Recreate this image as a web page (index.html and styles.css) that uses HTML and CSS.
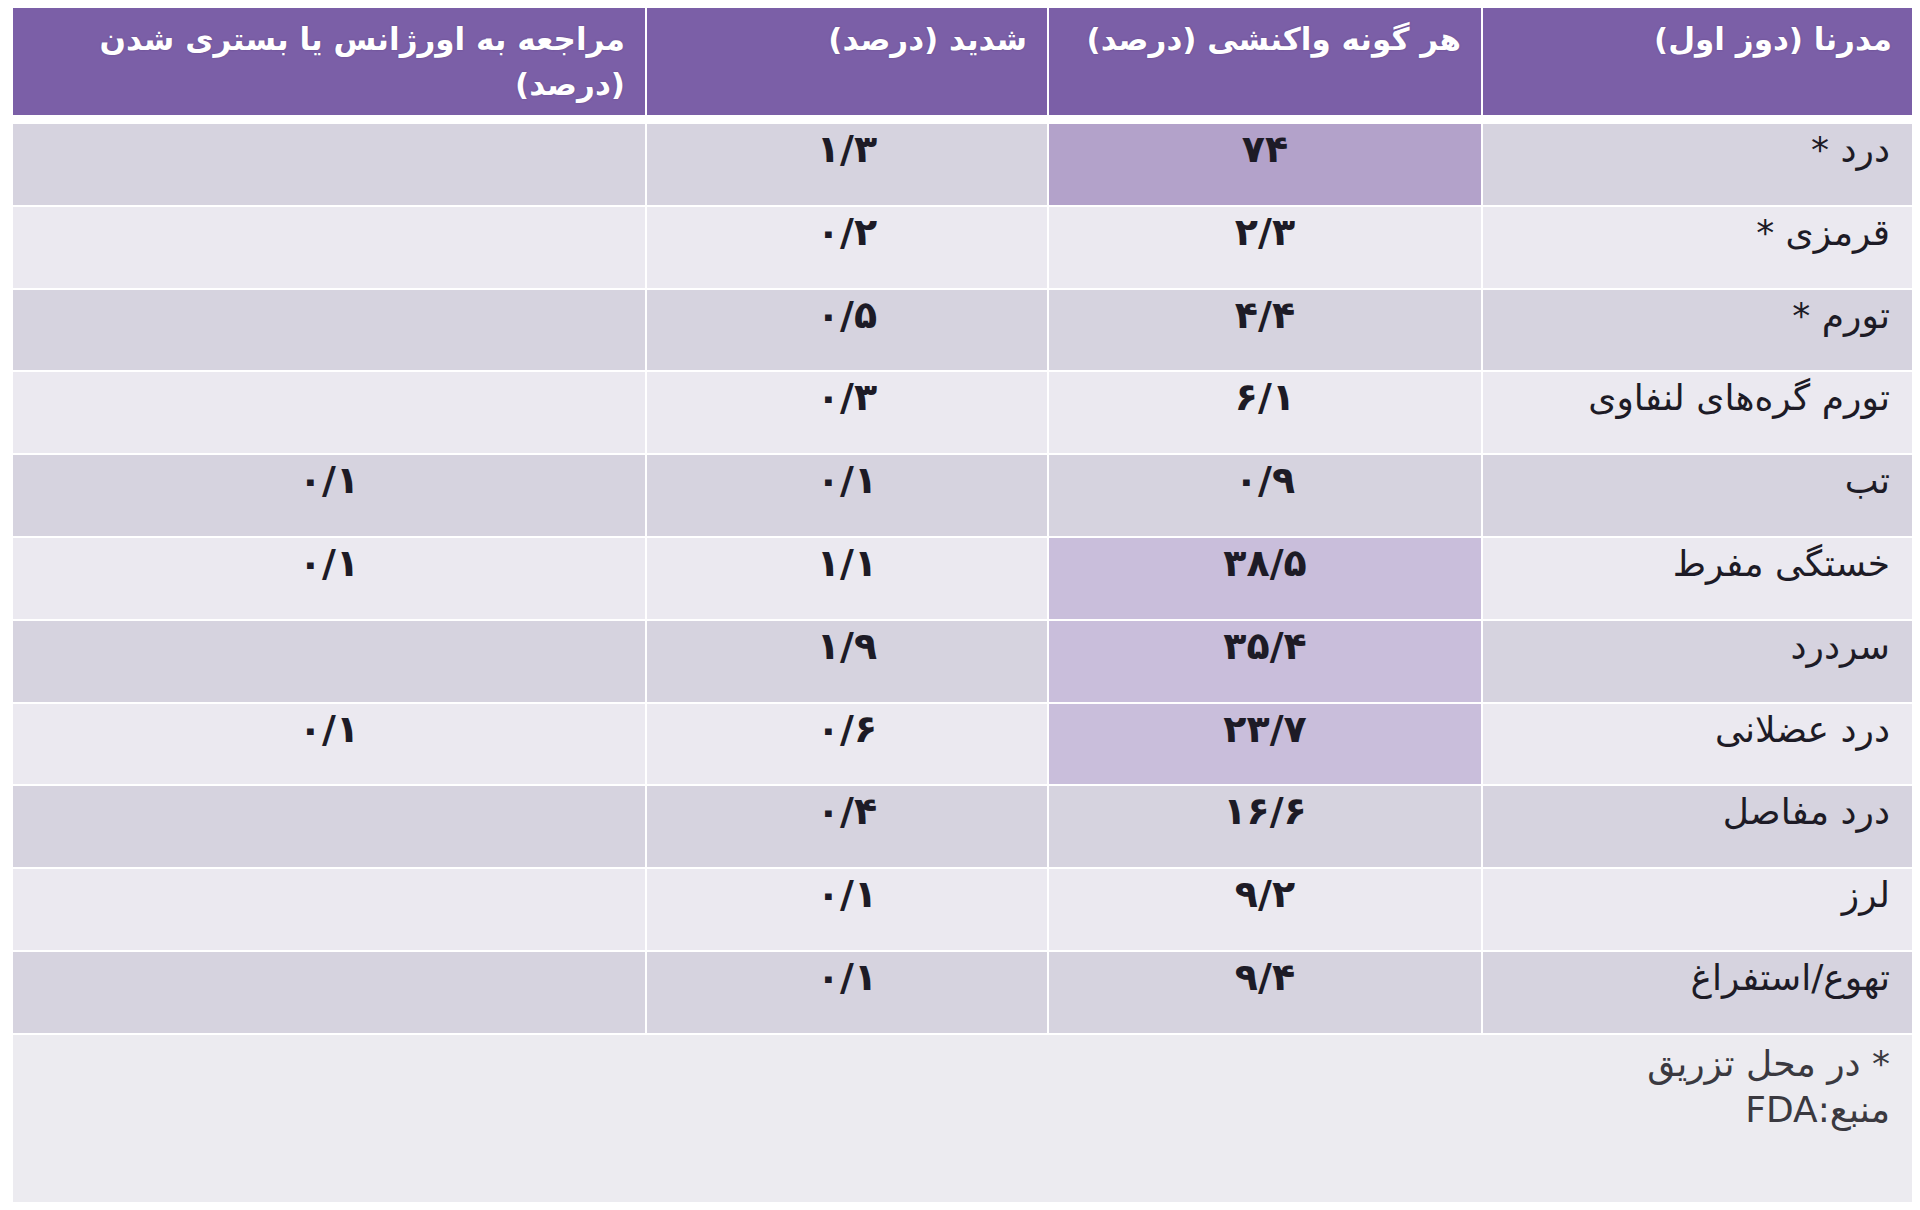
FILE: index.html
```html
<!DOCTYPE html>
<html lang="fa" dir="rtl">
<head>
<meta charset="utf-8">
<title>مدرنا (دوز اول)</title>
<link rel="stylesheet" href="styles.css">
</head>
<body>
<div class="sheet">
  <div class="table">
    <div class="cell head">مدرنا (دوز اول)</div>
    <div class="cell head">هر گونه واکنشی (درصد)</div>
    <div class="cell head">شدید (درصد)</div>
    <div class="cell head">مراجعه به اورژانس یا بستری شدن (درصد)</div>

    <div class="cell dark label">درد *</div>
    <div class="cell hi-strong num">۷۴</div>
    <div class="cell dark num">۱/۳</div>
    <div class="cell dark num"></div>

    <div class="cell light label">قرمزی *</div>
    <div class="cell light num">۲/۳</div>
    <div class="cell light num">۰/۲</div>
    <div class="cell light num"></div>

    <div class="cell dark label">تورم *</div>
    <div class="cell dark num">۴/۴</div>
    <div class="cell dark num">۰/۵</div>
    <div class="cell dark num"></div>

    <div class="cell light label">تورم گره‌های لنفاوی</div>
    <div class="cell light num">۶/۱</div>
    <div class="cell light num">۰/۳</div>
    <div class="cell light num"></div>

    <div class="cell dark label">تب</div>
    <div class="cell dark num">۰/۹</div>
    <div class="cell dark num">۰/۱</div>
    <div class="cell dark num">۰/۱</div>

    <div class="cell light label">خستگی مفرط</div>
    <div class="cell hi num">۳۸/۵</div>
    <div class="cell light num">۱/۱</div>
    <div class="cell light num">۰/۱</div>

    <div class="cell dark label">سردرد</div>
    <div class="cell hi num">۳۵/۴</div>
    <div class="cell dark num">۱/۹</div>
    <div class="cell dark num"></div>

    <div class="cell light label">درد عضلانی</div>
    <div class="cell hi num">۲۳/۷</div>
    <div class="cell light num">۰/۶</div>
    <div class="cell light num">۰/۱</div>

    <div class="cell dark label">درد مفاصل</div>
    <div class="cell dark num">۱۶/۶</div>
    <div class="cell dark num">۰/۴</div>
    <div class="cell dark num"></div>

    <div class="cell light label">لرز</div>
    <div class="cell light num">۹/۲</div>
    <div class="cell light num">۰/۱</div>
    <div class="cell light num"></div>

    <div class="cell dark label">تهوع/استفراغ</div>
    <div class="cell dark num">۹/۴</div>
    <div class="cell dark num">۰/۱</div>
    <div class="cell dark num"></div>
  </div>
  <div class="footer">
    <div class="note">* در محل تزریق</div>
    <div class="note">منبع:FDA</div>
  </div>
</div>
</body>
</html>
```

FILE: styles.css
```css
html, body {
  margin: 0;
  padding: 0;
  background: #ffffff;
}

body {
  font-family: "DejaVu Sans", "Noto Sans", sans-serif;
  direction: rtl;
}

.sheet {
  padding: 8px 8px 0 13px;
  display: flex;
  flex-direction: column;
  gap: 2px;
}

.table {
  display: grid;
  grid-template-columns: 429px 432px 400px 632px;
  grid-template-rows: 114px repeat(11, 80.8px);
  column-gap: 2px;
  row-gap: 2px;
}

.cell {
  box-sizing: border-box;
  font-size: 36px;
  line-height: 44px;
  color: #1d1b26;
}

.head {
  background: #7b5fa7;
  color: #ffffff;
  font-weight: bold;
  font-size: 31px;
  line-height: 45px;
  padding: 9px 20px 0 20px;
  text-align: right;
  margin-bottom: 7px;
  text-shadow: 0 0 2px rgba(60, 40, 90, 0.35);
}

.label {
  text-align: right;
  padding: 4px 22px 0 10px;
}

.num {
  text-align: center;
  font-weight: bold;
  font-size: 38px;
  padding: 3px 10px 0 10px;
}

.dark {
  background: #d6d3df;
}

.light {
  background: #ebe9f0;
}

.hi {
  background: #c9bedb;
}

.hi-strong {
  background: #b3a2ca;
}

.footer {
  background: #ecebf0;
  height: 167px;
  box-sizing: border-box;
  padding: 6px 22px 0 0;
}

.note {
  font-size: 36px;
  line-height: 46px;
  color: #3a3940;
}
```
